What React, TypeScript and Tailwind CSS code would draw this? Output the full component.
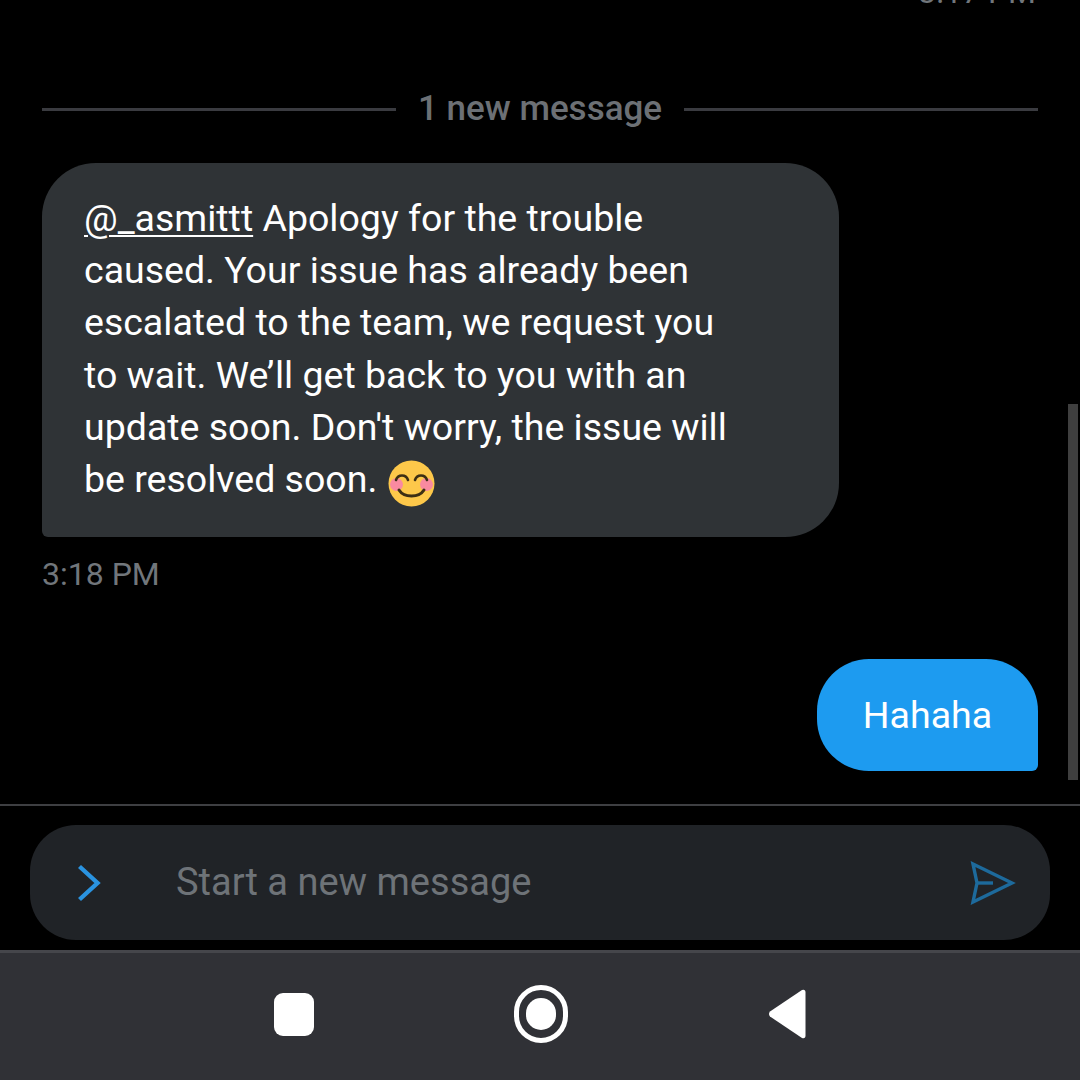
import React from 'react';

const font = { fontFamily: 'Roboto, sans-serif' };

const SendIcon = () => (
  <svg width="46" height="44" viewBox="0 0 46 44" fill="none" stroke="#1d6a9c" strokeWidth="3.4">
    <path d="M3 3 L42 22 L3 41 L7 22 Z" strokeLinejoin="miter" />
    <path d="M7 22 H23" />
  </svg>
);

const BlushEmoji = () => (
  <svg className="inline-block align-top mt-[7px] ml-[11px]" width="47" height="47" viewBox="0 0 47 47">
    <circle cx="23.5" cy="23.5" r="23" fill="#fdc84a" />
    <circle cx="8.5" cy="24.5" r="6.5" fill="#f98aa0" />
    <circle cx="38.5" cy="24.5" r="6.5" fill="#f98aa0" />
    <g fill="none" stroke="#3d2f14" strokeWidth="2.6" strokeLinecap="round">
      <path d="M8 20 C10 14 18 14 20 20" />
      <path d="M27 20 C29 14 37 14 39 20" />
      <path d="M11 30 C16 38 31 38 36 30" strokeWidth="3" />
    </g>
  </svg>
);

export default function App() {
  return (
    <div className="relative w-[1080px] h-[1080px] overflow-hidden bg-black flex flex-col" style={font}>
      <div className="h-[804px] flex flex-col px-[42px] overflow-hidden">
        <div className="mt-[-23px] h-[31px] text-right text-[32px] leading-[31px] text-[#71767b] pr-[2px]">3:17 PM</div>

        <div className="mt-[86px] flex items-center h-[30px]">
          <div className="flex-1 h-[3px] bg-[#3a3b40]" />
          <span className="px-[22px] text-[35px] leading-[30px] font-medium text-[#6c7075]">1 new message</span>
          <div className="flex-1 h-[3px] bg-[#3a3b40]" />
        </div>

        <div className="mt-[39px] w-[797px] h-[374px] bg-[#2f3336] rounded-[54px] rounded-bl-[6px] pl-[42px] pr-[40px] pt-[29px] text-[37.5px] leading-[52.2px] text-white">
          <span className="underline decoration-[2px] underline-offset-[4px]">@_asmittt</span> Apology for the trouble
          <br />
          caused. Your issue has already been
          <br />
          escalated to the team, we request you
          <br />
          to wait. We’ll get back to you with an
          <br />
          update soon. Don't worry, the issue will
          <br />
          be resolved soon.
          <BlushEmoji />
        </div>

        <div className="mt-[18px] text-[32px] leading-[38px] text-[#71767b]">3:18 PM</div>

        <div className="mt-[66px] self-end w-[221px] h-[112px] flex items-center justify-center bg-[#1d9bf0] rounded-[52px] rounded-br-[6px] text-[37.5px] text-white">
          Hahaha
        </div>
      </div>

      <div className="h-[2px] bg-[#3e3f42]" />

      <div className="flex-1 px-[30px] pt-[19px]">
        <div className="h-[115px] bg-[#202327] rounded-[46px] flex items-center pl-[46px] pr-[34px]">
          <svg width="26" height="38" viewBox="0 0 26 38" fill="none" stroke="#2a93e0" strokeWidth="4.4">
            <path d="M3.5 2.5 L21.5 19 L3.5 35.5" />
          </svg>
          <span className="ml-[74px] flex-1 text-[38px] text-[#6e7378]">Start a new message</span>
          <SendIcon />
        </div>
      </div>

      <div className="h-[130px] bg-[#303136] border-t-[3px] border-[#45464b] flex items-center justify-center gap-[200px] pb-[5px]">
        <div className="w-[40px] h-[43px] bg-white rounded-[9px]" />
        <div className="w-[54px] h-[58px] rounded-full border-[5px] border-white flex items-center justify-center">
          <div className="w-[30px] h-[32px] rounded-full bg-white" />
        </div>
        <svg width="38" height="50" viewBox="0 0 38 50" fill="#ffffff">
          <path d="M34 1 Q37.5 0 37.5 3.5 L37.5 46.5 Q37.5 50 34 49 L2 27.5 Q0 25 2 22.5 Z" />
        </svg>
      </div>

      <div className="absolute left-[1068px] top-[404px] w-[10px] h-[376px] bg-[#3f3f3f]" />
    </div>
  );
}
